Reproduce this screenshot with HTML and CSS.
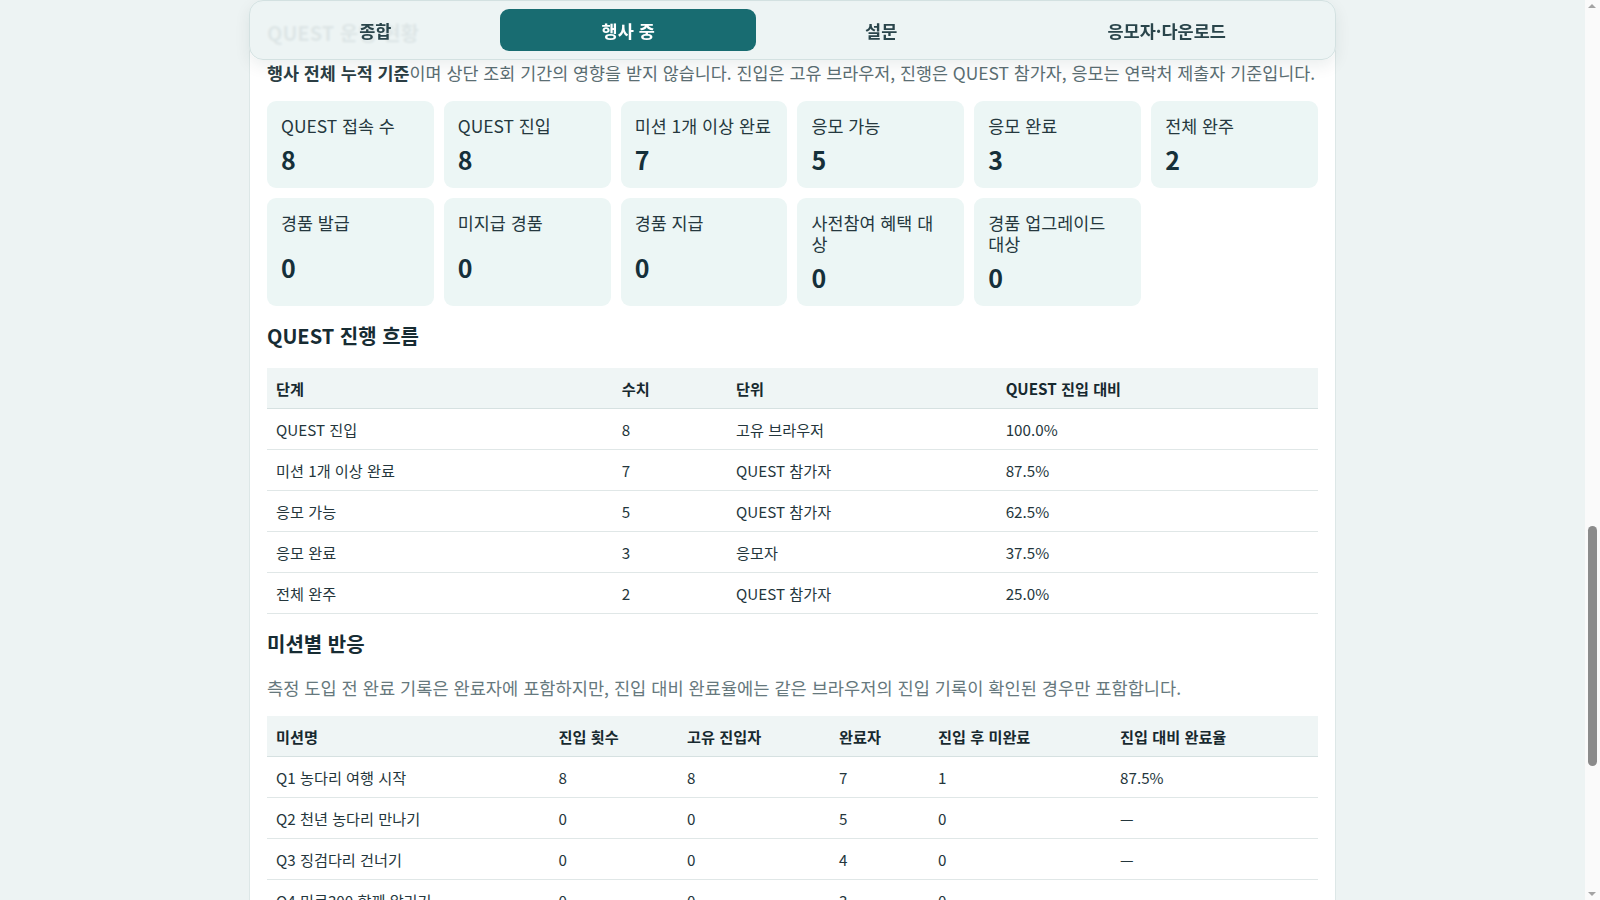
FILE: index.html
```html
<!DOCTYPE html>
<html lang="ko">
<head>
<meta charset="utf-8">
<title>QUEST 운영 현황</title>
<link rel="stylesheet" href="styles.css">
</head>
<body>
<div class="page">
  <nav class="tabs">
    <button class="tab" type="button">종합</button>
    <button class="tab is-active" type="button">행사 중</button>
    <button class="tab" type="button">설문</button>
    <button class="tab" type="button">응모자·다운로드</button>
  </nav>

  <section class="panel quest-panel" id="quest">
    <h2 class="panel-title">QUEST 운영 현황</h2>
    <p class="panel-lead"><strong>행사 전체 누적 기준</strong>이며 상단 조회 기간의 영향을 받지 않습니다. 진입은 고유 브라우저, 진행은 QUEST 참가자, 응모는 연락처 제출자 기준입니다.</p>

    <div class="stats">
      <div class="stat"><span class="stat-label">QUEST 접속 수</span><strong class="stat-value">8</strong></div>
      <div class="stat"><span class="stat-label">QUEST 진입</span><strong class="stat-value">8</strong></div>
      <div class="stat"><span class="stat-label">미션 1개 이상 완료</span><strong class="stat-value">7</strong></div>
      <div class="stat"><span class="stat-label">응모 가능</span><strong class="stat-value">5</strong></div>
      <div class="stat"><span class="stat-label">응모 완료</span><strong class="stat-value">3</strong></div>
      <div class="stat"><span class="stat-label">전체 완주</span><strong class="stat-value">2</strong></div>
      <div class="stat"><span class="stat-label">경품 발급</span><strong class="stat-value">0</strong></div>
      <div class="stat"><span class="stat-label">미지급 경품</span><strong class="stat-value">0</strong></div>
      <div class="stat"><span class="stat-label">경품 지급</span><strong class="stat-value">0</strong></div>
      <div class="stat"><span class="stat-label">사전참여 혜택 대상</span><strong class="stat-value">0</strong></div>
      <div class="stat"><span class="stat-label">경품 업그레이드 대상</span><strong class="stat-value">0</strong></div>
    </div>

    <section class="block">
      <h3 class="block-title">QUEST 진행 흐름</h3>
      <table class="data flow">
        <colgroup>
          <col class="c1"><col class="c2"><col class="c3"><col class="c4">
        </colgroup>
        <thead>
          <tr><th>단계</th><th>수치</th><th>단위</th><th>QUEST 진입 대비</th></tr>
        </thead>
        <tbody>
          <tr><td>QUEST 진입</td><td>8</td><td>고유 브라우저</td><td>100.0%</td></tr>
          <tr><td>미션 1개 이상 완료</td><td>7</td><td>QUEST 참가자</td><td>87.5%</td></tr>
          <tr><td>응모 가능</td><td>5</td><td>QUEST 참가자</td><td>62.5%</td></tr>
          <tr><td>응모 완료</td><td>3</td><td>응모자</td><td>37.5%</td></tr>
          <tr><td>전체 완주</td><td>2</td><td>QUEST 참가자</td><td>25.0%</td></tr>
        </tbody>
      </table>
    </section>

    <section class="block">
      <h3 class="block-title">미션별 반응</h3>
      <p class="block-desc">측정 도입 전 완료 기록은 완료자에 포함하지만, 진입 대비 완료율에는 같은 브라우저의 진입 기록이 확인된 경우만 포함합니다.</p>
      <table class="data missions">
        <colgroup>
          <col class="m1"><col class="m2"><col class="m3"><col class="m4"><col class="m5"><col class="m6">
        </colgroup>
        <thead>
          <tr><th>미션명</th><th>진입 횟수</th><th>고유 진입자</th><th>완료자</th><th>진입 후 미완료</th><th>진입 대비 완료율</th></tr>
        </thead>
        <tbody>
          <tr><td>Q1 농다리 여행 시작</td><td>8</td><td>8</td><td>7</td><td>1</td><td>87.5%</td></tr>
          <tr><td>Q2 천년 농다리 만나기</td><td>0</td><td>0</td><td>5</td><td>0</td><td>—</td></tr>
          <tr><td>Q3 징검다리 건너기</td><td>0</td><td>0</td><td>4</td><td>0</td><td>—</td></tr>
          <tr><td>Q4 미르300 함께 알리기</td><td>0</td><td>0</td><td>3</td><td>0</td><td>—</td></tr>
        </tbody>
      </table>
    </section>
  </section>
</div>

<div class="scrollbar" aria-hidden="true">
  <span class="sb-arrow sb-up"></span>
  <span class="sb-thumb"></span>
  <span class="sb-arrow sb-down"></span>
</div>
</body>
</html>
```

FILE: styles.css
```css
* { box-sizing: border-box; }

html, body { margin: 0; }

body {
  background: #edf3f3;
  font-family: "Noto Sans CJK KR", sans-serif;
  color: #1b2f36;
  padding-right: 15px;
}

.page {
  width: 1087px;
  margin: 0 auto;
  padding-top: 2px;
}

/* fixed tab bar lying over the content */
.tabs {
  position: fixed;
  top: 0;
  z-index: 10;
  width: 1087px;
  display: flex;
  gap: 8px;
  padding: 8px;
  background: rgba(236, 243, 243, 0.93);
  border: 1px solid #d3e1e1;
  border-radius: 14px;
  box-shadow: 0 6px 16px rgba(16, 48, 54, 0.08);
  backdrop-filter: blur(1px);
}

.tab {
  flex: 1 1 auto;
  height: 42px;
  padding: 0 12px;
  border: 0;
  border-radius: 9px;
  background: transparent;
  font-family: inherit;
  font-size: 17.5px;
  font-weight: 700;
  color: #2a454b;
  cursor: pointer;
}

.tab.is-active {
  background: #186c71;
  color: #ffffff;
}

/* panel */
.panel {
  background: #ffffff;
  border: 1px solid #dde7e7;
  border-radius: 14px;
  padding: 17px 17px 24px;
}

.panel-title {
  margin: 0 0 16px;
  font-size: 20px;
  line-height: 25px;
  font-weight: 700;
  color: #172c33;
}

.panel-lead {
  margin: 0 0 16px;
  font-size: 17.4px;
  line-height: 24px;
  color: #5b6e73;
}

.panel-lead strong {
  font-weight: 700;
  color: #2b3e44;
}

/* stat cards */
.stats {
  display: grid;
  grid-template-columns: repeat(6, 1fr);
  gap: 10px;
}

.stat {
  display: grid;
  gap: 9px;
  padding: 14px 16.3px 14px 14px;
  background: #ecf6f5;
  border-radius: 9px;
}

.stat-label {
  font-size: 17.4px;
  line-height: 21px;
  color: #25383e;
}

.stat-value {
  font-size: 25px;
  line-height: 29px;
  font-weight: 700;
  color: #15303a;
}

/* sections */
.block { margin-top: 17px; }

.block-title {
  margin: 0 0 20px;
  font-size: 20px;
  line-height: 25px;
  font-weight: 700;
  color: #172c33;
}

.block-desc {
  margin: 0 0 16px;
  font-size: 17.6px;
  line-height: 24px;
  color: #66787d;
}

/* tables */
.data {
  width: 100%;
  border-collapse: collapse;
  table-layout: fixed;
  font-size: 15.2px;
}

.data th,
.data td {
  padding: 10px 9px;
  line-height: 20px;
  text-align: left;
}

.data th {
  background: #eff5f5;
  font-weight: 700;
  color: #17292f;
  border-bottom: 1px solid #d6e1e1;
}

.data td {
  color: #24363c;
  border-bottom: 1px solid #e0e7e7;
}

.flow .c1 { width: 32.9%; }
.flow .c2 { width: 10.87%; }
.flow .c3 { width: 25.66%; }
.flow .c4 { width: 30.57%; }

.missions .m1 { width: 26.88%; }
.missions .m2 { width: 12.23%; }
.missions .m3 { width: 14.46%; }
.missions .m4 { width: 9.42%; }
.missions .m5 { width: 17.32%; }
.missions .m6 { width: 19.69%; }

/* window scrollbar as shown in the capture */
.scrollbar {
  position: fixed;
  top: 0;
  right: 0;
  width: 15px;
  height: 100vh;
  background: #fafafa;
  z-index: 20;
}

.sb-arrow {
  position: absolute;
  left: 3px;
  width: 0;
  height: 0;
  border-left: 4.5px solid transparent;
  border-right: 4.5px solid transparent;
}

.sb-up {
  top: 4px;
  border-bottom: 4px solid #a3a3a3;
}

.sb-down {
  bottom: 4px;
  border-top: 4px solid #a3a3a3;
}

.sb-thumb {
  position: absolute;
  top: 526px;
  left: 3px;
  width: 9px;
  height: 240px;
  border-radius: 5px;
  background: #8b8b8b;
}
```
